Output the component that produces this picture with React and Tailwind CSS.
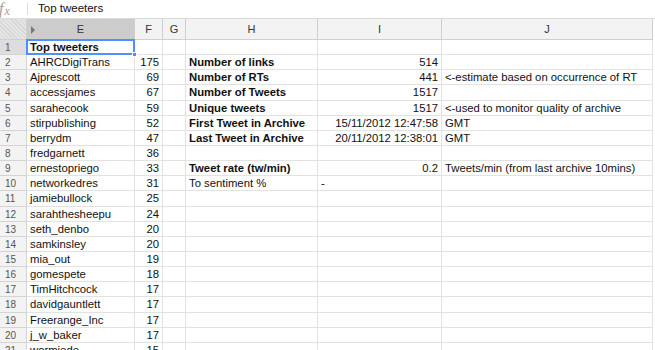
import React from "react";

const rows = [
  { e: "Top tweeters", eBold: true },
  { e: "AHRCDigiTrans", f: "175", h: "Number of links", hb: true, i: "514" },
  { e: "Ajprescott", f: "69", h: "Number of RTs", hb: true, i: "441", j: "<-estimate based on occurrence of RT" },
  { e: "accessjames", f: "67", h: "Number of Tweets", hb: true, i: "1517" },
  { e: "sarahecook", f: "59", h: "Unique tweets", hb: true, i: "1517", j: "<-used to monitor quality of archive" },
  { e: "stirpublishing", f: "52", h: "First Tweet in Archive", hb: true, i: "15/11/2012 12:47:58", j: "GMT" },
  { e: "berrydm", f: "47", h: "Last Tweet in Archive", hb: true, i: "20/11/2012 12:38:01", j: "GMT" },
  { e: "fredgarnett", f: "36" },
  { e: "ernestopriego", f: "33", h: "Tweet rate (tw/min)", hb: true, i: "0.2", j: "Tweets/min (from last archive 10mins)" },
  { e: "networkedres", f: "31", h: "To sentiment %", i: "-", iLeft: true },
  { e: "jamiebullock", f: "25" },
  { e: "sarahthesheepu", f: "24" },
  { e: "seth_denbo", f: "20" },
  { e: "samkinsley", f: "20" },
  { e: "mia_out", f: "19" },
  { e: "gomespete", f: "18" },
  { e: "TimHitchcock", f: "17" },
  { e: "davidgauntlett", f: "17" },
  { e: "Freerange_Inc", f: "17" },
  { e: "j_w_baker", f: "17" },
  { e: "wormiede", f: "15" },
];

const cell =
  "h-[15.15px] border-r border-b border-[#e2e2e2] bg-white overflow-hidden whitespace-nowrap text-[11.3px] leading-[15px] text-[#111] px-[3px]";

function Header({ label, selected }) {
  return (
    <div
      className={
        "h-[21px] border-r border-b border-[#cfcfcf] flex items-center justify-center text-[11px] text-[#333] " +
        (selected ? "bg-[#cccccc] relative" : "bg-[#f3f3f3]")
      }
    >
      {selected && (
        <span className="absolute left-[4px] top-[7px] w-0 h-0 border-y-[4px] border-y-transparent border-l-[4px] border-l-[#777]" />
      )}
      {label}
    </div>
  );
}

export default function App() {
  return (
    <div className="w-[655px] h-[350px] overflow-hidden bg-white font-['Liberation_Sans',Arial,sans-serif]">
      {/* formula bar */}
      <div className="h-[19px] flex items-center border-b border-[#dadada]">
        <div className="w-[27px] flex items-end h-[15px] text-[#a0a0a0] italic font-['Liberation_Serif',serif] leading-none">
          <span className="-ml-[1px] text-[16px]">f</span>
          <span className="text-[12px] ml-[1px]">x</span>
        </div>
        <div className="w-px h-[12px] bg-[#dcdcdc]" />
        <div className="pl-[10px] text-[11.5px] text-[#111]">Top tweeters</div>
      </div>

      {/* sheet grid */}
      <div className="grid grid-cols-[27px_108px_28px_23px_132px_124px_211px]">
        <div className="h-[21px] border-r border-b border-[#cfcfcf] bg-[repeating-linear-gradient(45deg,#d6d6d6_0px,#d6d6d6_1px,#e4e4e4_1px,#e4e4e4_3px)]" />
        <Header label="E" selected />
        <Header label="F" />
        <Header label="G" />
        <Header label="H" />
        <Header label="I" />
        <Header label="J" />

        {rows.map((r, idx) => (
          <React.Fragment key={idx}>
            <div
              className={
                "h-[15.15px] border-r border-b border-[#d4d4d4] pl-[5px] text-[10px] leading-[15px] text-[#555] " +
                (idx === 0 ? "bg-[#dddddd]" : "bg-[#f3f3f3]")
              }
            >
              {idx + 1}
            </div>
            <div className={cell + (idx === 0 ? " relative overflow-visible z-10" : "")}>
              <span className={r.eBold ? "font-bold" : ""}>{r.e}</span>
              {idx === 0 && (
                <>
                  <span className="absolute -left-px -top-px -right-px -bottom-px border-2 border-[#4d90fe]" />
                  <span className="absolute -right-[3px] -bottom-[3px] w-[5px] h-[5px] bg-[#4d90fe] border border-white" />
                </>
              )}
            </div>
            <div className={cell + " text-right"}>{r.f}</div>
            <div className={cell} />
            <div className={cell + (r.hb ? " font-bold" : "")}>{r.h}</div>
            <div className={cell + (r.iLeft ? "" : " text-right")}>{r.i}</div>
            <div className={cell}>{r.j}</div>
          </React.Fragment>
        ))}
      </div>
    </div>
  );
}
